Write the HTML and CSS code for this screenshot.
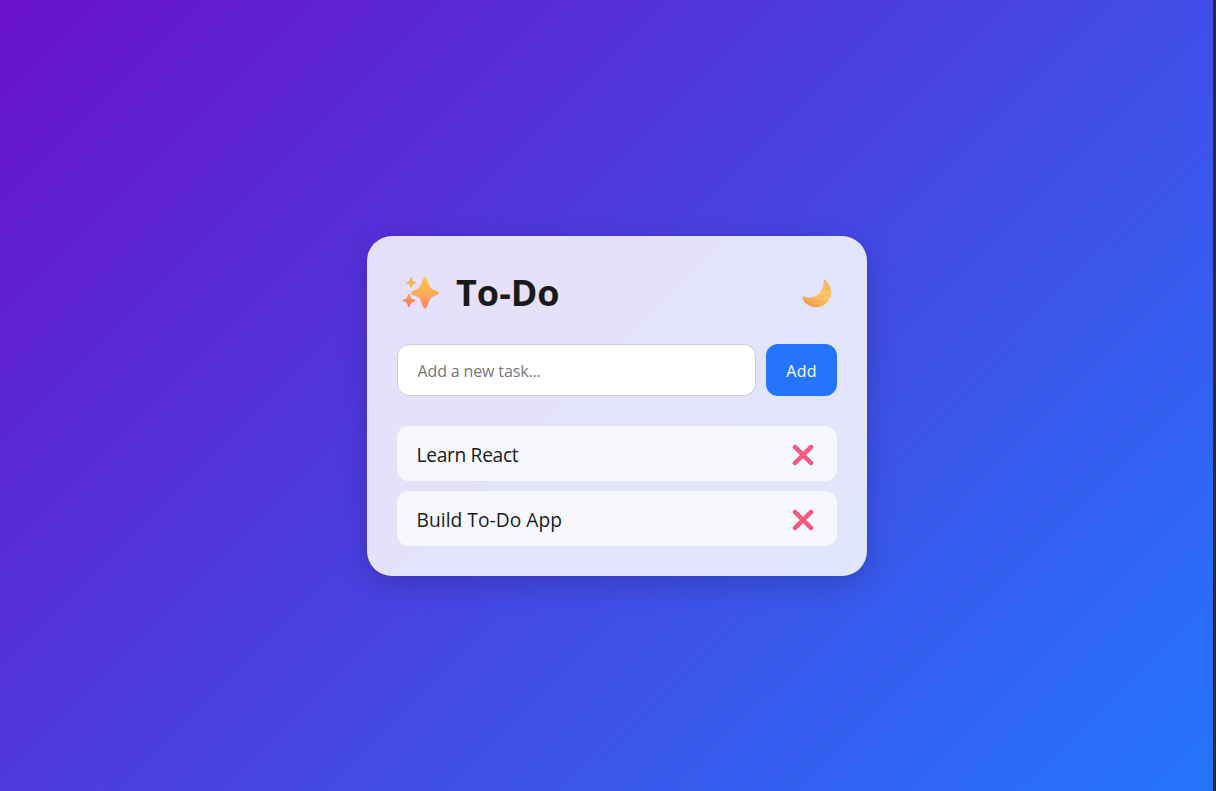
FILE: index.html
```html
<!DOCTYPE html>
<html lang="en">
<head>
<meta charset="utf-8">
<title>To-Do</title>
<link rel="stylesheet" href="styles.css">
</head>
<body>
<svg class="defs" width="0" height="0" aria-hidden="true">
  <defs>
    <linearGradient id="spark" x1="0" y1="0" x2="0" y2="1"><stop offset="0" stop-color="#f8c649"/><stop offset=".5" stop-color="#fbae58"/><stop offset="1" stop-color="#ff7e63"/></linearGradient>
    <linearGradient id="sparkTop" x1="0" y1="0" x2="0" y2="1"><stop offset="0" stop-color="#f0b44e"/><stop offset="1" stop-color="#f9b556"/></linearGradient>
    <linearGradient id="sparkLow" x1="0" y1="0" x2="0" y2="1"><stop offset="0" stop-color="#f9a253"/><stop offset="1" stop-color="#ff7566"/></linearGradient>
    <linearGradient id="moon" x1=".9" y1="0" x2=".4" y2="1"><stop offset="0" stop-color="#f2b45f"/><stop offset=".55" stop-color="#fdc96a"/><stop offset="1" stop-color="#f09a4c"/></linearGradient>
  </defs>
</svg>
<div class="page">
  <main class="card">
    <header class="header">
      <h1 class="title">
        <svg class="sparkles" viewBox="0 0 38 34" aria-hidden="true">
          <path fill="url(#spark)" d="M22 1.400Q23.600-.8 25.200 1.400L28.600 9.600Q29.300 11.400 31 12.100L37 14.900Q38.800 16.500 37 18.100L31 20.700Q29.300 21.400 28.600 23.200L25.200 31.400Q23.600 33.600 22 31.400L18.600 23.200Q17.900 21.400 16.200 20.700L10 18.100Q8.200 16.500 10 14.900L16.200 12.100Q17.900 11.400 18.600 9.600Z"/>
          <path fill="url(#sparkTop)" d="M8.900.6Q9.400.1 9.900.6L11.300 4.100 14.200 5.400Q14.800 6 14.200 6.500L11.300 7.800 9.900 11Q9.400 11.600 8.900 11L7.500 7.800 4.600 6.500Q4 6 4.600 5.400L7.500 4.100Z"/>
          <path fill="url(#sparkLow)" d="M6.400 17.500Q7.100 16.800 7.800 17.500L9.500 22 13.500 23.600Q14.200 24.200 13.500 24.900L9.500 26.500 7.800 30.900Q7.100 31.600 6.400 30.900L4.800 26.500.8 24.900Q.1 24.200.8 23.600L4.800 22Z"/>
        </svg>
        <span class="title-text">To-Do</span>
      </h1>
      <button class="icon-button theme" aria-label="Toggle theme">
        <svg class="moon" viewBox="0 0 30 28" aria-hidden="true">
          <path fill="url(#moon)" d="M21.700.4C22.300-.4 23.400-.1 24.200.7 28.300 4.400 30.300 11 28.700 16.300 26.300 24.300 18.300 28.400 10.600 26.800 5.800 25.800 2.200 22.800.6 18.600.1 17.200 1.200 16.200 2.600 16.800 7 18.400 13 17.700 17 13.500 20.400 9.900 22 5.600 21.700.4Z"/>
          <g fill="#f7a94c" fill-opacity=".4"><circle cx="24.500" cy="8.500" r="1.500"/><circle cx="20" cy="16.500" r="2"/><circle cx="12.500" cy="20" r="1.300"/><circle cx="17.500" cy="22.300" r="1.800"/><circle cx="25.700" cy="15.500" r="1.500"/></g>
          <g fill="none" stroke="#ffdc85" stroke-width=".6"><path d="M18 17.500a2.200 2.200 0 0 0 4 0M15.700 23.200a2 2 0 0 0 3.600 0"/></g>
        </svg>
      </button>
    </header>
    <form class="form">
      <input class="task-input" type="text" placeholder="Add a new task..." aria-label="New task">
      <button class="add" type="button">Add</button>
    </form>
    <ul class="list">
      <li class="item">
        <span class="learn">Learn React</span>
        <button class="icon-button remove" aria-label="Remove"><svg class="cross" viewBox="0 0 22 22"><path class="cross-edge" d="M3 3 19 19M19 3 3 19"/><path class="cross-fill" d="M3 3 19 19M19 3 3 19"/></svg></button>
      </li>
      <li class="item">
        <span class="build">Build To-Do App</span>
        <button class="icon-button remove" aria-label="Remove"><svg class="cross" viewBox="0 0 22 22"><path class="cross-edge" d="M3 3 19 19M19 3 3 19"/><path class="cross-fill" d="M3 3 19 19M19 3 3 19"/></svg></button>
      </li>
    </ul>
  </main>
</div>
</body>
</html>
```
FILE: styles.css
```css
* { box-sizing: border-box; }
body {
  margin: 0;
  height: 791px;
  overflow: hidden;
  display: flex;
  background: #2b2b2b;
  font-family: "Segoe UI", "Open Sans", "Noto Sans", sans-serif;
  color: #1a1a1a;
}
.defs { position: absolute; }
.page {
  width: 1213px;
  height: 791px;
  padding: 236px 0 0 367px;
  background: linear-gradient(135deg, #6a11cb, #2575fc);
}
.card {
  width: 500px;
  height: 340px;
  padding: 30px;
  border-radius: 25px;
  background: rgba(255, 255, 255, 0.85);
  box-shadow: 0 8px 30px rgba(0, 0, 0, 0.2);
}
.header {
  height: 53px;
  margin-bottom: 25px;
  display: flex;
  align-items: center;
  justify-content: space-between;
}
.title {
  margin: 0;
  display: flex;
  align-items: center;
  gap: 17px;
  padding-left: 5px;
  font-size: 36px;
  line-height: 53px;
  font-weight: 700;
}
.sparkles { width: 37px; height: 33px; margin-top: 1px; }
.title-text { margin-bottom: 1px; }
.icon-button {
  display: flex;
  padding: 0;
  border: 0;
  background: none;
}
.theme { margin: 2px 5px 0 0; }
.moon { width: 30px; height: 28px; }
.form {
  display: flex;
  gap: 10px;
  height: 52px;
  margin: 0 0 30px;
}
.task-input {
  flex: 1;
  min-width: 0;
  padding: 2px 19.5px 0;
  border: 1px solid #ccc;
  border-radius: 12px;
  background: #fff;
  font: 16px "Segoe UI", "Open Sans", "Noto Sans", sans-serif;
  letter-spacing: -0.14px;
}
.task-input::placeholder { color: #757575; }
.add {
  width: 71px;
  padding: 2px 0 0;
  border: 0;
  border-radius: 12px;
  background: #2575fc;
  color: #fff;
  font: 500 16px "Segoe UI", "Open Sans", "Noto Sans", sans-serif;
  letter-spacing: 0.2px;
}
.list {
  margin: 0;
  padding: 0;
  display: flex;
  flex-direction: column;
  gap: 10px;
  list-style: none;
}
.item {
  height: 55px;
  padding: 2px 23px 0 19.5px;
  display: flex;
  align-items: center;
  justify-content: space-between;
  border-radius: 12px;
  background: #f7f8fe;
  font-size: 19.2px;
}
.learn { letter-spacing: -0.32px; }
.build { letter-spacing: 0.04px; }
.cross { width: 22px; height: 22px; }
.cross path {
  fill: none;
  stroke-linecap: round;
}
.cross-edge {
  stroke: #ec4577;
  stroke-width: 4.4;
}
.cross-fill {
  stroke: #fd5c82;
  stroke-width: 2.6;
}
```
